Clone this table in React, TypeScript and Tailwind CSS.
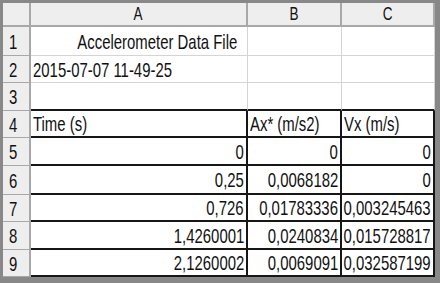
type Align = 'left' | 'right' | 'center'

type CellProps = {
  text?: string
  align?: Align
  dark?: boolean
  pr?: string
}

const rowHeights = ['h-[29px]', 'h-[27px]', 'h-[28px]', 'h-[27px]', 'h-[28px]', 'h-[29px]', 'h-[27px]', 'h-[28px]', 'h-[27px]']

const rows: { text?: string; align?: Align; pr?: string }[][] = [
  [{ text: 'Accelerometer Data File', align: 'right', pr: 'pr-[10px]' }, {}, {}],
  [{ text: '2015-07-07 11-49-25', align: 'left' }, {}, {}],
  [{}, {}, {}],
  [
    { text: 'Time (s)', align: 'left' },
    { text: 'Ax* (m/s2)', align: 'left' },
    { text: 'Vx (m/s)', align: 'left' },
  ],
  [
    { text: '0', align: 'right' },
    { text: '0', align: 'right' },
    { text: '0', align: 'right' },
  ],
  [
    { text: '0,25', align: 'right' },
    { text: '0,0068182', align: 'right' },
    { text: '0', align: 'right' },
  ],
  [
    { text: '0,726', align: 'right' },
    { text: '0,01783336', align: 'right' },
    { text: '0,003245463', align: 'right' },
  ],
  [
    { text: '1,4260001', align: 'right' },
    { text: '0,0240834', align: 'right' },
    { text: '0,015728817', align: 'right' },
  ],
  [
    { text: '2,1260002', align: 'right' },
    { text: '0,0069091', align: 'right' },
    { text: '0,032587199', align: 'right' },
  ],
]

// the sheet is squeezed horizontally, so each label is scaled on x only
const Txt = ({ text, align }: { text: string; align: Align }) => (
  <span
    className={
      'inline-block whitespace-nowrap text-[21px] leading-none scale-x-[0.71] ' +
      (align === 'right' ? 'origin-right' : align === 'left' ? 'origin-left' : 'origin-center')
    }
  >
    {text}
  </span>
)

const Cell = ({ text, align = 'left', dark, pr }: CellProps) => (
  <div
    className={
      'flex items-center ' +
      (align === 'right' ? 'justify-end ' + (pr ?? 'pr-[2px]') : 'justify-start pl-[2px]') +
      ' ' +
      (dark ? 'border-r-2 border-b-2 border-[#161616]' : 'border-r border-b border-[#d4d4d4]')
    }
  >
    {text && <Txt text={text} align={align} />}
  </div>
)

export default function App() {
  return (
    <div
      className="w-[440px] h-[283px] overflow-hidden bg-[#888888] pt-[3px] pl-[3px] text-[#111111]"
      style={{ fontFamily: '"Liberation Sans", Arial, sans-serif' }}
    >
      <div className="grid w-[432px] grid-cols-[28px_217px_94px_93px] bg-white">
        <div className="h-[24px] bg-[#eeeeee] border-r-2 border-b-2 border-[#a8a8a8]" />
        {['A', 'B', 'C'].map((c) => (
          <div
            key={c}
            className="h-[24px] flex items-center justify-center bg-[#eeeeee] border-r-2 border-b-2 border-[#a8a8a8]"
          >
            <span className="inline-block text-[18px] leading-none scale-x-[0.75] origin-center">{c}</span>
          </div>
        ))}

        {rows.map((r, i) => {
          const dark = i >= 3
          const thickBelow = i === 2
          return (
            <div key={i} className="contents">
              <div
                className={
                  rowHeights[i] +
                  ' flex items-center pl-[6px] bg-[#eeeeee] border-r-2 border-b border-[#a8a8a8]'
                }
              >
                <Txt text={String(i + 1)} align="left" />
              </div>
              {r.map((cell, j) =>
                thickBelow ? (
                  <div key={j} className="border-r border-[#d4d4d4] border-b-2 border-b-[#161616]" />
                ) : (
                  <Cell key={j} text={cell.text} align={cell.align} dark={dark} pr={cell.pr} />
                ),
              )}
            </div>
          )
        })}
      </div>
    </div>
  )
}
